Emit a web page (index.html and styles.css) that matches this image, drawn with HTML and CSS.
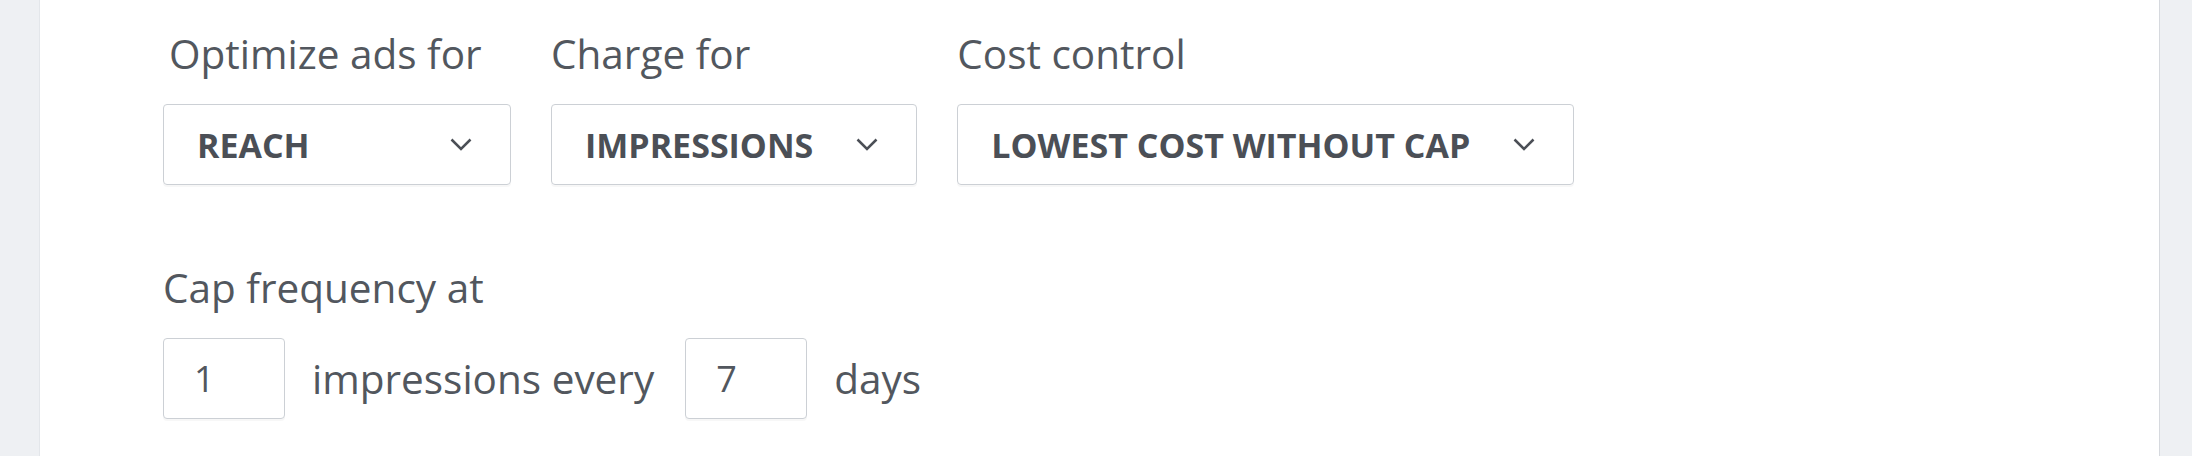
FILE: index.html
```html
<!DOCTYPE html>
<html lang="en">
  <head>
    <meta charset="UTF-8" />
    <title>Delivery settings</title>
    <link rel="stylesheet" href="styles.css">
  </head>
  <body>
    <div class="page">
      <section class="panel">
        <div class="row">
          <div class="field field--inset">
            <div class="field-label">Optimize ads for</div>
            <div class="select">
              <span>REACH</span>
              <svg class="chevron" viewBox="0 0 22 13"><polyline points="1.5,1.5 11,11 20.5,1.5" /></svg>
            </div>
          </div>
          <div class="field">
            <div class="field-label">Charge for</div>
            <div class="select">
              <span>IMPRESSIONS</span>
              <svg class="chevron" viewBox="0 0 22 13"><polyline points="1.5,1.5 11,11 20.5,1.5" /></svg>
            </div>
          </div>
          <div class="field">
            <div class="field-label">Cost control</div>
            <div class="select">
              <span>LOWEST COST WITHOUT CAP</span>
              <svg class="chevron" viewBox="0 0 22 13"><polyline points="1.5,1.5 11,11 20.5,1.5" /></svg>
            </div>
          </div>
        </div>

        <div class="freq">
          <div class="field-label">Cap frequency at</div>
          <div class="freq-row">
            <input class="num" type="text" value="1" />
            <span>impressions every</span>
            <input class="num num--days" type="text" value="7" />
            <span>days</span>
          </div>
        </div>
      </section>
    </div>
  </body>
</html>
```

FILE: styles.css
```css
/* --- Base --- */
body {
  margin: 0;
  background: #eef0f3;
  font-family: "Open Sans", "Liberation Sans", sans-serif;
  color: #4b4f56;
}
.page {
  display: flex;
  height: 100vh;
  padding: 0 32px 0 39px;
  box-sizing: border-box;
}

/* --- White panel --- */
.panel {
  flex: 1;
  background: #fff;
  border-left: 1px solid #e3e6ea;
  border-right: 1px solid #d6d9de;
  padding: 27px 0 0 123px;
}

/* --- Dropdown row --- */
.row {
  display: flex;
  gap: 40px;
}
.field-label {
  font-size: 40.5px;
  line-height: 54px;
  margin-bottom: 23px;
  color: #52575e;
}
.field--inset .field-label {
  padding-left: 6px;
}
.select {
  display: flex;
  align-items: center;
  justify-content: space-between;
  gap: 43px;
  min-width: 348px;
  height: 81px;
  box-sizing: border-box;
  padding: 0 38px 0 33px;
  border: 1px solid #ccd0d5;
  border-radius: 4px;
  box-shadow: 0 2px 0 rgba(0, 0, 0, 0.03);
  font-size: 34px;
  font-weight: 700;
}
.chevron {
  width: 22px;
  height: 13px;
  fill: none;
  stroke: #4b4f56;
  stroke-width: 2.5;
}

/* --- Frequency cap --- */
.freq {
  margin-top: 76px;
}
.freq .field-label {
  margin-bottom: 23px;
}
.freq-row {
  display: flex;
  align-items: center;
  gap: 27px;
  font-size: 40.5px;
  color: #52575e;
}
.num {
  width: 122px;
  height: 81px;
  box-sizing: border-box;
  padding: 0 0 0 30px;
  border: 1px solid #ccd0d5;
  border-radius: 4px;
  box-shadow: 0 2px 0 rgba(0, 0, 0, 0.03);
  font-family: "Open Sans", "Liberation Sans", sans-serif;
  font-size: 36px;
  color: #52575e;
  outline: none;
}
.num--days {
  margin-left: 4px;
}
```
